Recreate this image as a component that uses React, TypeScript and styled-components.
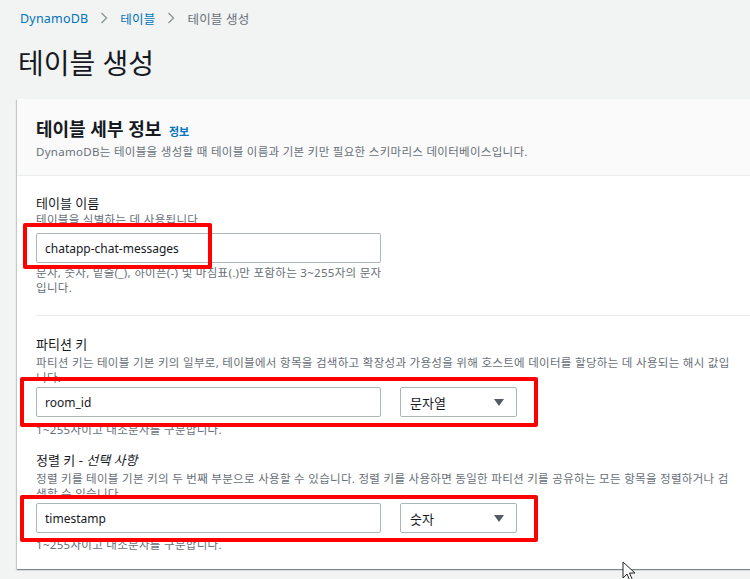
import React from 'react';
import styled, { createGlobalStyle } from 'styled-components';

const GlobalStyle = createGlobalStyle`
  html, body {
    margin: 0;
    padding: 0;
    background: #f2f3f3;
    font-family: 'Noto Sans', 'Noto Sans CJK KR', sans-serif;
    color: #16191f;
  }
`;

interface KeyRowProps {
  value: string;
  type?: string;
  boxTop: number;
  boxHeight: number;
}

function KeyRow({ value, type, boxTop, boxHeight }: KeyRowProps) {
  return (
    <InputRow>
      <TextInput>{value}</TextInput>
      {type ? (
        <Select>
          <span>{type}</span>
          <Caret />
        </Select>
      ) : null}
      <Highlight $top={boxTop} $left={-16} $width={518} $height={boxHeight} />
    </InputRow>
  );
}

function Chevron() {
  return (
    <svg width="8" height="12" viewBox="0 0 8 12">
      <path d="M1.5 1 L6.5 6 L1.5 11" fill="none" stroke="#879596" strokeWidth="1.3" />
    </svg>
  );
}

function Cursor() {
  return (
    <CursorMark width="16" height="22" viewBox="0 0 16 22">
      <path
        d="M1 1 L1 17 L5 13 L8 20 L10.5 19 L7.5 12 L13 12 Z"
        fill="#fff"
        stroke="#222"
        strokeWidth="1"
        strokeLinejoin="round"
      />
    </CursorMark>
  );
}

export default function App() {
  return (
    <Page>
      <GlobalStyle />
      <Breadcrumbs>
        <Crumb $link>DynamoDB</Crumb>
        <Chevron />
        <Crumb $link>테이블</Crumb>
        <Chevron />
        <Crumb>테이블 생성</Crumb>
      </Breadcrumbs>

      <PageTitle>테이블 생성</PageTitle>

      <Card>
        <CardHeader>
          <HeaderTitle>
            테이블 세부 정보 <InfoLink>정보</InfoLink>
          </HeaderTitle>
          <Description>
            DynamoDB는 테이블을 생성할 때 테이블 이름과 기본 키만 필요한 스키마리스 데이터베이스입니다.
          </Description>
        </CardHeader>

        <CardBody>
          <Field>
            <Label>테이블 이름</Label>
            <Description>테이블을 식별하는 데 사용됩니다</Description>
            <InputRow $gap={6}>
              <TextInput>chatapp-chat-messages</TextInput>
              <Highlight $top={-10} $left={-13} $width={189} $height={46} />
            </InputRow>
            <Constraint $gap={2}>
              <Line>문자, 숫자, 밑줄(_), 하이픈(-) 및 마침표(.)만 포함하는 3~255자의 문자</Line>
              <Line>입니다.</Line>
            </Constraint>
          </Field>

          <Divider />

          <Field>
            <Label>파티션 키</Label>
            <Description $gap={2}>
              <Line>
                파티션 키는 테이블 기본 키의 일부로, 테이블에서 항목을 검색하고 확장성과 가용성을 위해 호스트에 데이터를 할당하는 데 사용되는 해시 값입
              </Line>
              <Line>니다.</Line>
            </Description>
            <KeyRow value="room_id" type="문자열" boxTop={-10} boxHeight={50} />
            <Constraint $gap={5}>1~255자이고 대소문자를 구분합니다.</Constraint>
          </Field>

          <Field $gap={14}>
            <Label>
              정렬 키 - <em>선택 사항</em>
            </Label>
            <Description $gap={2}>
              <Line>
                정렬 키를 테이블 기본 키의 두 번째 부분으로 사용할 수 있습니다. 정렬 키를 사용하면 동일한 파티션 키를 공유하는 모든 항목을 정렬하거나 검
              </Line>
              <Line>색할 수 있습니다.</Line>
            </Description>
            <KeyRow value="timestamp" type="숫자" boxTop={-8} boxHeight={47} />
            <Constraint $gap={4}>1~255자이고 대소문자를 구분합니다.</Constraint>
          </Field>
        </CardBody>
      </Card>
      <Cursor />
    </Page>
  );
}

const Page = styled.div`
  position: relative;
  width: 750px;
  height: 579px;
  overflow: hidden;
  padding: 9px 0 0 17px;
  box-sizing: border-box;
`;

const Breadcrumbs = styled.nav`
  display: flex;
  align-items: center;
  gap: 10px;
  height: 18px;
  padding-left: 1px;
  font-size: 12.5px;
`;

const Crumb = styled.span<{ $link?: boolean }>`
  color: ${(p) => (p.$link ? '#0073bb' : '#687078')};
  margin: 0 2px;
  letter-spacing: 0.2px;
`;

const PageTitle = styled.h1`
  margin: 18px 0 0 1px;
  font-size: 28px;
  font-weight: 400;
  line-height: 36px;
  color: #16191f;
`;

const Card = styled.section`
  margin-top: 18px;
  width: 770px;
  background: #fff;
  box-shadow: 0 1px 1px 0 rgba(0, 28, 36, 0.3), 1px 1px 1px 0 rgba(0, 28, 36, 0.15),
    -1px 1px 1px 0 rgba(0, 28, 36, 0.15);
`;

const CardHeader = styled.header`
  background: #fafafa;
  border-bottom: 1px solid #eaeded;
  padding: 18px 20px 16px 19px;
`;

const HeaderTitle = styled.h2`
  margin: 0;
  font-size: 18px;
  font-weight: 700;
  line-height: 24px;
  color: #16191f;
`;

const InfoLink = styled.a`
  margin-left: 3px;
  font-size: 11px;
  font-weight: 700;
  color: #0073bb;
`;

const Description = styled.div<{ $gap?: number }>`
  margin-top: ${(p) => p.$gap ?? 0}px;
  font-size: 11.5px;
  letter-spacing: 0.3px;
  line-height: 15px;
  color: #687078;
`;

const Line = styled.span`
  display: block;
  white-space: nowrap;
`;

const CardBody = styled.div`
  padding: 18px 20px 17px 19px;
`;

const Field = styled.div<{ $gap?: number }>`
  display: flex;
  flex-direction: column;
  margin-top: ${(p) => p.$gap ?? 0}px;
`;

const Label = styled.div`
  font-size: 13px;
  line-height: 18px;
  color: #16191f;

  em {
    font-style: italic;
  }
`;

const InputRow = styled.div<{ $gap?: number }>`
  position: relative;
  display: flex;
  gap: 19px;
  margin-top: ${(p) => p.$gap ?? 2}px;
`;

const TextInput = styled.div`
  width: 345px;
  height: 30px;
  box-sizing: border-box;
  border: 1px solid #aab7b8;
  border-radius: 2px;
  background: #fff;
  padding: 0 8px;
  display: flex;
  align-items: center;
  font-size: 12px;
  color: #16191f;
`;

const Select = styled.div`
  width: 117px;
  height: 30px;
  box-sizing: border-box;
  border: 1px solid #aab7b8;
  border-radius: 2px;
  background: #fff;
  padding: 0 10px 0 9px;
  display: flex;
  align-items: center;
  justify-content: space-between;
  font-size: 13px;
  color: #16191f;
`;

const Caret = styled.span`
  width: 0;
  height: 0;
  border-left: 5px solid transparent;
  border-right: 5px solid transparent;
  border-top: 7px solid #545b64;
  margin-right: 2px;
`;

const Highlight = styled.div<{ $top: number; $left: number; $width: number; $height: number }>`
  position: absolute;
  top: ${(p) => p.$top}px;
  left: ${(p) => p.$left}px;
  width: ${(p) => p.$width}px;
  height: ${(p) => p.$height}px;
  box-sizing: border-box;
  border: 4px solid #ff0000;
  border-radius: 2px;
  pointer-events: none;
`;

const Constraint = styled.div<{ $gap?: number }>`
  margin-top: ${(p) => p.$gap ?? 0}px;
  font-size: 11.5px;
  letter-spacing: 0.3px;
  line-height: 15px;
  color: #687078;
`;

const Divider = styled.hr`
  margin: 20px -20px 19px 0;
  border: 0;
  border-top: 1px solid #eaeded;
`;

const CursorMark = styled.svg`
  position: absolute;
  left: 622px;
  top: 561px;
`;
